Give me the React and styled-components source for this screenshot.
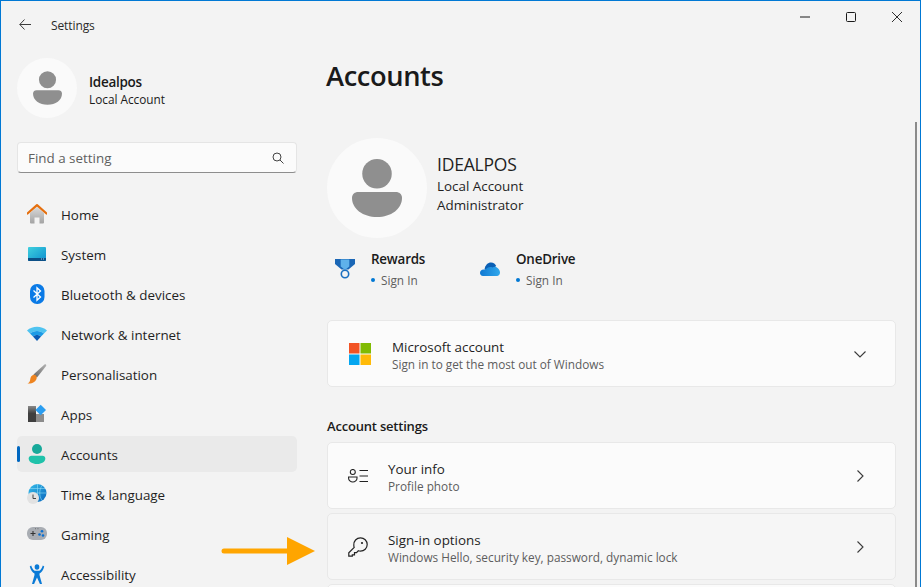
import React from "react"
import styled, { createGlobalStyle } from "styled-components"

const GlobalStyle = createGlobalStyle`
  html, body { margin: 0; padding: 0; background: #f3f3f3; }
  body { font-family: "Open Sans", "Noto Sans", sans-serif; color: #1b1b1b; }
  * { box-sizing: border-box; }
`

const Win = styled.div`
  position: relative;
  width: 921px;
  height: 587px;
  overflow: hidden;
  background: #f3f3f3;
  border: 1px solid #0078d4;
  border-bottom: 0;
`

const TitleBar = styled.header`
  display: flex;
  align-items: center;
  height: 47px;
  padding-left: 18px;
`

const BackBtn = styled.span`
  display: flex;
  width: 32px;
`

const AppName = styled.span`
  font-size: 12px;
  letter-spacing: -0.1px;
  color: #2b2b2b;
  margin-top: 2px;
`

const Controls = styled.div`
  display: flex;
  align-items: center;
  gap: 36px;
  margin-left: auto;
  margin-right: 18px;
  margin-top: -15px;
`

const Body = styled.div`
  display: flex;
`

const Sidebar = styled.aside`
  width: 325px;
  flex: none;
  padding: 10px 0 0 16px;
`

const Profile = styled.div`
  display: flex;
  align-items: center;
  gap: 12px;
`

const ProfileText = styled.div`
  padding-top: 3px;
`

const Avatar = styled.div`
  width: ${p => p.$size}px;
  height: ${p => p.$size}px;
  border-radius: 50%;
  background: #fafafa;
  display: flex;
  align-items: center;
  justify-content: center;
  flex: none;
`

const ProfileName = styled.div`
  font-size: 13.5px;
  font-weight: 600;
  line-height: 18px;
  letter-spacing: -0.3px;
  color: #1a1a1a;
`

const ProfileSub = styled.div`
  font-size: 11.8px;
  line-height: 16px;
  color: #1a1a1a;
`

const Search = styled.div`
  display: flex;
  align-items: center;
  justify-content: space-between;
  width: 280px;
  height: 31px;
  margin-top: 24px;
  padding: 0 12px 0 10px;
  background: #fbfbfb;
  border: 1px solid #e5e5e5;
  border-bottom-color: #8d8d8d;
  border-radius: 4px;
  font-size: 13.4px;
  color: #5f5f5f;
`

const Nav = styled.nav`
  display: flex;
  flex-direction: column;
  gap: 4px;
  margin-top: 23px;
`

const NavItem = styled.div`
  position: relative;
  display: flex;
  align-items: center;
  width: 280px;
  height: 36px;
  flex: none;
  padding-left: 10px;
  border-radius: 5px;
  background: ${p => (p.$active ? "#eaeaea" : "transparent")};
  font-size: 13.4px;
  color: #1f1f1f;

  ${p => p.$active && `
    &::before {
      content: "";
      position: absolute;
      left: 0;
      top: 10px;
      width: 3px;
      height: 16px;
      border-radius: 2px;
      background: #0067c0;
    }
  `}
`

const NavIcon = styled.span`
  display: flex;
  width: 34px;
  flex: none;
`

const NavLabel = styled.span`
  padding-top: 2px;
`

const Main = styled.main`
  flex: 1;
  min-width: 0;
  padding: 0 24px 0 0;
`

const PageTitle = styled.h1`
  margin: 9px 0 0 0;
  font-size: 27.3px;
  font-weight: 600;
  line-height: 38px;
  letter-spacing: -0.4px;
  color: #1a1a1a;
`

const Hero = styled.section`
  display: flex;
  align-items: flex-start;
  gap: 10px;
  margin: 43px 0 0 1px;
`

const HeroText = styled.div`
  padding-top: 14px;
`

const HeroName = styled.div`
  font-size: 17.5px;
  line-height: 25px;
  letter-spacing: -0.2px;
  color: #1f1f1f;
`

const HeroLine = styled.div`
  font-size: 13.4px;
  line-height: 19px;
  color: #1f1f1f;
`

const Services = styled.div`
  display: flex;
  margin: 11px 0 0 9px;
`

const Service = styled.div`
  display: flex;
  width: ${p => p.$width}px;
  flex: none;
`

const ServiceIcon = styled.span`
  display: flex;
  align-items: flex-start;
  width: 36px;
  padding-top: ${p => p.$top}px;
  flex: none;
`

const ServiceName = styled.div`
  font-size: 13.4px;
  font-weight: 600;
  line-height: 20px;
  letter-spacing: -0.2px;
  color: #1a1a1a;
`

const ServiceStatus = styled.div`
  display: flex;
  align-items: center;
  gap: 6px;
  margin-top: 1px;
  font-size: 11.8px;
  line-height: 20px;
  color: #5d5d5d;

  &::before {
    content: "";
    width: 4px;
    height: 4px;
    border-radius: 50%;
    background: #0078d4;
  }
`

const Card = styled.div`
  display: flex;
  align-items: center;
  width: 569px;
  height: 67px;
  margin: ${p => p.$margin || "4px 0 0 1px"};
  padding-left: ${p => p.$pad || 20}px;
  padding-right: 29px;
  background: ${p => (p.$hover ? "#f6f6f6" : "#fbfbfb")};
  border: 1px solid #e8e8e8;
  border-radius: 5px;
`

const CardIcon = styled.span`
  display: flex;
  width: ${p => p.$width}px;
  flex: none;
`

const CardBody = styled.div`
  flex: 1;
  padding-top: 4px;
`

const CardTitle = styled.div`
  font-size: 13.4px;
  line-height: 18px;
  color: #1f1f1f;
`

const CardSub = styled.div`
  font-size: 11.8px;
  line-height: 17px;
  color: #5d5d5d;
`

const SectionHead = styled.h2`
  margin: 30px 0 7px 1px;
  font-size: 13px;
  font-weight: 600;
  line-height: 18px;
  letter-spacing: -0.2px;
  color: #1a1a1a;
`

const ScrollThumb = styled.div`
  position: absolute;
  right: 3px;
  top: 121px;
  bottom: 0;
  width: 2px;
  background: #8a8a8a;
`

const Callout = styled.svg`
  position: absolute;
  left: 220px;
  top: 534px;
`

const Person = ({ width, height }) => (
  <svg width={width} height={height} viewBox="0 0 50 58">
    <circle cx="25" cy="14.750" r="14.750" fill="#8f8f8f" />
    <path d="M6 33h38c3 0 6 2 6 6 0 11-11 19-25 19S0 50 0 39c0-4 3-6 6-6z" fill="#8f8f8f" />
  </svg>
)

const Home = () => (
  <svg width="20" height="20" viewBox="0 0 20 20">
    <defs>
      <linearGradient id="hb" x1="0" y1="0" x2="0" y2="1">
        <stop offset="0" stopColor="#d9d9d9" />
        <stop offset="1" stopColor="#a3a3a3" />
      </linearGradient>
    </defs>
    <path d="M3 9l7-6 7 6v9.500a1 1 0 0 1-1 1h-3.500v-6h-5v6H4a1 1 0 0 1-1-1z" fill="url(#hb)" />
    <path d="M0.500 9.500L10 1.200l9.500 8.300" fill="none" stroke="#e56f0e" strokeWidth="2.200" strokeLinecap="round" strokeLinejoin="round" />
  </svg>
)

const System = () => (
  <svg width="20" height="20" viewBox="0 0 20 20">
    <defs>
      <linearGradient id="sy" x1="0" y1="0" x2="1" y2="1">
        <stop offset="0" stopColor="#3fd0de" />
        <stop offset="1" stopColor="#0d8fcf" />
      </linearGradient>
    </defs>
    <rect x="1" y="3" width="18" height="14" rx="1" fill="url(#sy)" />
    <path d="M1 14h18v2a1 1 0 0 1-1 1H2a1 1 0 0 1-1-1z" fill="#0c4f86" />
    <path d="M14 15h1M16 15h1" stroke="#9fd4ea" strokeWidth="1" />
  </svg>
)

const Bluetooth = () => (
  <svg width="20" height="20" viewBox="0 0 20 20">
    <rect x="3" y="0" width="14.500" height="20" rx="7" fill="#0a7ae6" />
    <path d="M6.500 6.500l7 6.500-3.500 3.200V3.800L13.500 7l-7 6.500" fill="none" stroke="#fff" strokeWidth="1.300" />
  </svg>
)

const Wifi = () => (
  <svg width="20" height="20" viewBox="0 0 20 20">
    <path d="M0 6.500C5.500 1.500 14.500 1.500 20 6.500l-3 3C13 6 7 6 3 9.500z" fill="#4fc3f0" />
    <path d="M3 9.500C7 6 13 6 17 9.500l-3 3c-2.400-2-5.600-2-8 0z" fill="#1c9be6" />
    <path d="M6 12.500c2.400-2 5.600-2 8 0L10 17z" fill="#0a5cb5" />
  </svg>
)

const Brush = () => (
  <svg width="20" height="20" viewBox="0 0 20 20">
    <defs>
      <linearGradient id="br" x1="0" y1="1" x2="1" y2="0">
        <stop offset="0" stopColor="#666" />
        <stop offset="1" stopColor="#b4b4b4" />
      </linearGradient>
    </defs>
    <path d="M6.500 10.500L17.500 0.500c1-.8 2.200.3 1.600 1.400L10 13.500z" fill="url(#br)" />
    <path d="M6 11c2-1 4 .8 3.700 3C9.300 17.500 5 20 0.500 19.500 2.500 18.500 3 17 3.300 15c.3-2 1-3.300 2.700-4z" fill="#ee8420" />
  </svg>
)

const Apps = () => (
  <svg width="20" height="20" viewBox="0 0 20 20">
    <defs>
      <linearGradient id="ap" x1="0" y1="0" x2="0" y2="1">
        <stop offset="0" stopColor="#8a8a8a" />
        <stop offset="1" stopColor="#3a3a3a" />
      </linearGradient>
    </defs>
    <rect x="1" y="2" width="8" height="8" fill="url(#ap)" />
    <rect x="1" y="10" width="8" height="8" fill="#3f3f3f" />
    <rect x="9" y="10" width="8" height="8" fill="#8c8c8c" />
    <path d="M13.700 .7L19 6l-5.300 5.300L8.400 6z" fill="#2a9df0" />
  </svg>
)

const AccountsIcon = () => (
  <svg width="20" height="20" viewBox="0 0 20 20">
    <circle cx="10" cy="5" r="5" fill="#17a99a" />
    <path d="M4.500 11.700h11c1.600 0 2.800 1 2.800 2.800 0 3.200-3.500 5.500-8.300 5.500s-8.300-2.300-8.300-5.500c0-1.800 1.200-2.800 2.800-2.800z" fill="#1fc2aa" />
  </svg>
)

const TimeIcon = () => (
  <svg width="20" height="20" viewBox="0 0 20 20">
    <defs>
      <linearGradient id="gl" x1="0" y1="0" x2="1" y2="1">
        <stop offset="0" stopColor="#35bdea" />
        <stop offset="1" stopColor="#0b66bd" />
      </linearGradient>
    </defs>
    <circle cx="10.500" cy="9" r="9" fill="url(#gl)" />
    <path d="M3 4.500h15M1.500 9h18M10.500 0v18M15 1.500c-3 4.500-3 10.500 0 15" fill="none" stroke="#8fdcf5" strokeWidth=".6" />
    <circle cx="6" cy="14" r="6" fill="#e2e2e2" />
    <path d="M6 10.500V14.500h3" fill="none" stroke="#444" strokeWidth="1" />
  </svg>
)

const Gamepad = () => (
  <svg width="20" height="20" viewBox="0 0 20 20">
    <rect x="0" y="3" width="20" height="13" rx="6" fill="#a9adb3" />
    <path d="M3.500 9.500h5M6 7v5" stroke="#333" strokeWidth="1.100" />
    <circle cx="15" cy="7.200" r="1.300" fill="#0a6fd0" />
    <circle cx="12.500" cy="10.500" r="1.300" fill="#0a6fd0" />
    <circle cx="16" cy="11.500" r="1.300" fill="#0a6fd0" />
    <path d="M8 4.700h.9M10.500 4.700h.9" stroke="#555" strokeWidth=".8" />
  </svg>
)

const Accessibility = () => (
  <svg width="20" height="20" viewBox="-2 0 24 20" preserveAspectRatio="none">
    <circle cx="10" cy="3" r="2.800" fill="#0a7ad6" />
    <path d="M3 1.500c1.500 3.500 3 5 4.300 5.300h5.400C14 6.500 15.500 5 17 1.500l1.700 1C17.500 6 15.500 8.500 13 9.500v1.500l3 9h-2.500L10 13.500 6.500 20H4l3-9V9.500C4.500 8.500 2.500 6 1.300 2.500z" fill="#0a7ad6" />
  </svg>
)

const Rewards = () => (
  <svg width="20" height="24" viewBox="0 0 20 24">
    <path d="M0 4h20v5l-6.500 5.500h-7L0 9z" fill="#1a66b5" />
    <path d="M5.700 4.500h8.600v7L10 15 5.700 11.500z" fill="#5fb1ea" />
    <circle cx="10" cy="19" r="3.700" fill="none" stroke="#1a6fc0" strokeWidth="1.600" />
  </svg>
)

const OneDrive = () => (
  <svg width="20" height="14" viewBox="0 0 20 14">
    <defs>
      <linearGradient id="od" x1="0" y1="0" x2="1" y2="0">
        <stop offset="0" stopColor="#0f78d2" />
        <stop offset="1" stopColor="#30a8ec" />
      </linearGradient>
    </defs>
    <path d="M4.500 7.500C5 3 8 .4 11 .4c2.500 0 4.500 1.500 5.200 3.600L10 9z" fill="#0a5fb4" />
    <path d="M3 14C1 14 0 12.500 0 11c0-2 1.500-3.500 3.500-3.500.8 0 1 .1 1.500.3C7 5.500 10 4.300 12.500 5.500c1-.7 2.600-1.300 4-.3 2 .8 3.500 3.300 3.500 5.300 0 2-1.500 3.500-3 3.500z" fill="url(#od)" />
  </svg>
)

const MsLogo = () => (
  <svg width="22" height="22" viewBox="0 0 22 22">
    <rect x="0" y="0" width="10.500" height="10.500" fill="#f25325" />
    <rect x="11.500" y="0" width="10.500" height="10.500" fill="#80bb03" />
    <rect x="0" y="11.500" width="10.500" height="10.500" fill="#05a6f0" />
    <rect x="11.500" y="11.500" width="10.500" height="10.500" fill="#ffba08" />
  </svg>
)

const InfoIcon = () => (
  <svg width="20" height="14" viewBox="0 0 20 14" fill="none" stroke="#222" strokeWidth="1.100">
    <circle cx="4.800" cy="3" r="2.500" />
    <path d="M.6 8h8.400v1.200c0 2-2 3.800-4.200 3.800S.6 11.200.6 9.200z" />
    <path d="M11.500 1.500H20M11.500 7H20M11.500 12.500H20" />
  </svg>
)

const KeyIcon = () => (
  <svg width="20" height="20" viewBox="0 0 20 20" fill="none" stroke="#222" strokeWidth="1.200">
    <path d="M12.500 0.800a6.700 6.700 0 0 1 0 13.400c-.8 0-1.500-.1-2.200-.4L8.500 15.600H6.500v2.200H4.300v1.400H0.800v-3.400l5.400-5.400c-.3-.7-.4-1.500-.4-2.300A6.700 6.700 0 0 1 12.500 0.800z" />
    <circle cx="14" cy="6" r="1.100" fill="#222" stroke="none" />
  </svg>
)

const navItems = [
  ["Home", Home],
  ["System", System],
  ["Bluetooth & devices", Bluetooth],
  ["Network & internet", Wifi],
  ["Personalisation", Brush],
  ["Apps", Apps],
  ["Accounts", AccountsIcon, true],
  ["Time & language", TimeIcon],
  ["Gaming", Gamepad],
  ["Accessibility", Accessibility],
]

const Chevron = ({ down }) => (
  <svg width="12" height="12" viewBox="0 0 12 12" fill="none" stroke="#3a3a3a" strokeWidth="1.100">
    <path d={down ? "M.5 3.500L6 9l5.500-5.500" : "M3.500 .5L9 6l-5.500 5.500"} />
  </svg>
)

export default function App() {
  return (
    <>
      <GlobalStyle />
      <Win>
        <TitleBar>
          <BackBtn>
            <svg width="12" height="11" viewBox="0 0 12 11" fill="none" stroke="#3c3c3c" strokeWidth="1">
              <path d="M12 5.500H.8M5.500 .5L.8 5.500l4.700 5" />
            </svg>
          </BackBtn>
          <AppName>Settings</AppName>
          <Controls>
            <svg width="10" height="10" viewBox="0 0 10 10" stroke="#1a1a1a"><path d="M0 5h10" /></svg>
            <svg width="10" height="10" viewBox="0 0 10 10" fill="none" stroke="#1a1a1a"><rect x=".5" y=".5" width="9" height="9" rx="1" /></svg>
            <svg width="10" height="10" viewBox="0 0 10 10" stroke="#1a1a1a" strokeWidth=".9"><path d="M0 0l10 10M10 0L0 10" /></svg>
          </Controls>
        </TitleBar>
        <Body>
          <Sidebar>
            <Profile>
              <Avatar $size={60}><Person width={29} height={34} /></Avatar>
              <ProfileText>
                <ProfileName>Idealpos</ProfileName>
                <ProfileSub>Local Account</ProfileSub>
              </ProfileText>
            </Profile>
            <Search>
              <span>Find a setting</span>
              <svg width="12" height="12" viewBox="0 0 12 12" fill="none" stroke="#444" strokeWidth="1">
                <circle cx="5" cy="5" r="4" />
                <path d="M8 8l3.500 3.500" />
              </svg>
            </Search>
            <Nav>
              {navItems.map(([label, Icon, active]) => (
                <NavItem key={label} $active={active}>
                  <NavIcon><Icon /></NavIcon>
                  <NavLabel>{label}</NavLabel>
                </NavItem>
              ))}
            </Nav>
          </Sidebar>
          <Main>
            <PageTitle>Accounts</PageTitle>
            <Hero>
              <Avatar $size={100}><Person width={50} height={58} /></Avatar>
              <HeroText>
                <HeroName>IDEALPOS</HeroName>
                <HeroLine>Local Account</HeroLine>
                <HeroLine>Administrator</HeroLine>
              </HeroText>
            </Hero>
            <Services>
              <Service $width={145}>
                <ServiceIcon $top={6}><Rewards /></ServiceIcon>
                <div>
                  <ServiceName>Rewards</ServiceName>
                  <ServiceStatus>Sign In</ServiceStatus>
                </div>
              </Service>
              <Service $width={145}>
                <ServiceIcon $top={13}><OneDrive /></ServiceIcon>
                <div>
                  <ServiceName>OneDrive</ServiceName>
                  <ServiceStatus>Sign In</ServiceStatus>
                </div>
              </Service>
            </Services>
            <Card $margin="30px 0 0 1px" $pad={21}>
              <CardIcon $width={43}><MsLogo /></CardIcon>
              <CardBody>
                <CardTitle>Microsoft account</CardTitle>
                <CardSub>Sign in to get the most out of Windows</CardSub>
              </CardBody>
              <Chevron down />
            </Card>
            <SectionHead>Account settings</SectionHead>
            <Card $margin="0 0 0 1px">
              <CardIcon $width={40}><InfoIcon /></CardIcon>
              <CardBody>
                <CardTitle>Your info</CardTitle>
                <CardSub>Profile photo</CardSub>
              </CardBody>
              <Chevron />
            </Card>
            <Card $hover>
              <CardIcon $width={40}><KeyIcon /></CardIcon>
              <CardBody>
                <CardTitle>Sign-in options</CardTitle>
                <CardSub>Windows Hello, security key, password, dynamic lock</CardSub>
              </CardBody>
              <Chevron />
            </Card>
            <Card />
          </Main>
        </Body>
        <ScrollThumb />
        <Callout width="96" height="30" viewBox="0 0 96 30">
          <path d="M3 16h66" stroke="#ffa500" strokeWidth="5" strokeLinecap="round" />
          <path d="M66 2l28 14-28 14z" fill="#ffa500" />
        </Callout>
      </Win>
    </>
  )
}
